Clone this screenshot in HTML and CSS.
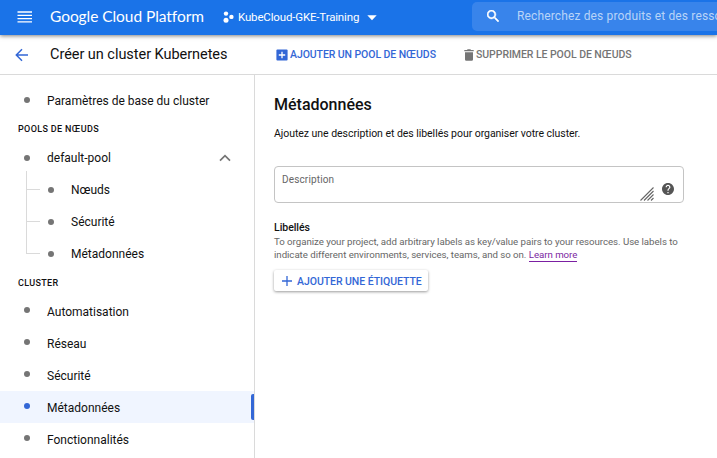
FILE: index.html
```
<!DOCTYPE html>
<html lang="fr">
<head>
<meta charset="utf-8">
<title>Créer un cluster Kubernetes</title>
<link rel="stylesheet" href="styles.css">
</head>
<body>
<header class="topbar">
  <svg class="menu" width="16" height="12" viewBox="0 0 16 12"><path d="M.5 1h14.500M.5 4.300h14.500M.5 7.600h14.500M.5 10.900h14.500" stroke="#fff" stroke-width="1.300"/></svg>
  <span class="brand">Google Cloud Platform</span>
  <svg class="project-icon" width="11" height="12" viewBox="0 0 11 12" fill="#fff"><circle cx="3" cy="2.600" r="2.200"/><circle cx="3" cy="9.200" r="2.500"/><circle cx="8.400" cy="5.900" r="2.200"/></svg>
  <span class="project">KubeCloud-GKE-Training</span>
  <svg class="caret" width="10" height="6" viewBox="0 0 10 6"><path d="M.3.3h9.400L5 5.300z" fill="#fff"/></svg>
  <div class="search">
    <svg width="12" height="12" viewBox="3 3 17.500 17.500"><path fill="#fff" stroke="#fff" stroke-width=".7" d="M15.500 14h-.79l-.28-.27A6.471 6.471 0 0 0 16 9.500 6.500 6.500 0 1 0 9.500 16c1.610 0 3.090-.59 4.230-1.570l.27.28v.79l5 4.990L20.490 19l-4.990-5zm-6 0C7.010 14 5 11.990 5 9.500S7.010 5 9.500 5 14 7.010 14 9.500 11.990 14 9.500 14z"/></svg>
    <span class="search-text">Recherchez des produits et des ressources</span>
  </div>
</header>
<div class="toolbar">
  <svg class="back" width="14" height="14" viewBox="0 0 14 14" fill="none" stroke="#3367d6" stroke-width="1.500"><path d="M13 7H1.600M7 1.200 1.300 7 7 12.800"/></svg>
  <h1 class="title">Créer un cluster Kubernetes</h1>
  <div class="action add"><svg width="12" height="12" viewBox="0 0 12 12"><rect x=".4" y=".4" width="11.200" height="11.200" rx="1" fill="#3367d6"/><path d="M6 2.800v6.400M2.800 6h6.400" stroke="#fff" stroke-width="1.300"/></svg><span class="add-text">AJOUTER UN POOL DE NŒUDS</span></div>
  <div class="action remove"><svg width="10" height="12" viewBox="0 0 10 12" fill="#757575"><path d="M.3.900h2.600L3.700.200h2.600l.8.700h2.600v1.400H.3zM1 3.200h8v7.300q0 1.300-1.300 1.300H2.300Q1 11.800 1 10.500z"/></svg><span class="remove-text">SUPPRIMER LE POOL DE NŒUDS</span></div>
</div>
<div class="body">
  <nav class="sidebar">
    <div class="item"><i class="dot"></i><span>Paramètres de base du cluster</span></div>
    <div class="group">POOLS DE NŒUDS</div>
    <div class="item pool"><i class="dot"></i><span>default-pool</span><svg class="chevron" width="12" height="8" viewBox="0 0 12 8"><path d="M1 6.700 6 1.700l5 5" fill="none" stroke="#757575" stroke-width="1.700"/></svg></div>
    <div class="tree">
      <div class="item"><i class="dot"></i><span>Nœuds</span></div>
      <div class="item"><i class="dot"></i><span>Sécurité</span></div>
      <div class="item"><i class="dot"></i><span>Métadonnées</span></div>
    </div>
    <div class="group second">CLUSTER</div>
    <div class="item low"><i class="dot"></i><span>Automatisation</span></div>
    <div class="item low"><i class="dot"></i><span>Réseau</span></div>
    <div class="item low"><i class="dot"></i><span>Sécurité</span></div>
    <div class="item low active"><i class="dot"></i><span>Métadonnées</span></div>
    <div class="item low"><i class="dot"></i><span>Fonctionnalités</span></div>
  </nav>
  <main class="content">
    <h2 class="heading">Métadonnées</h2>
    <p class="intro">Ajoutez une description et des libellés pour organiser votre cluster.</p>
    <div class="field">
      <span class="field-label">Description</span>
      <svg class="grip" width="14" height="14" viewBox="0 0 14 14"><path d="M.5 13.500 13.500.500M4 13.500 13.500 4M7.500 13.500l6-6M11 13.500l2.500-2.500" stroke="#666" stroke-width="1.100"/></svg>
      <svg class="help" width="12" height="12" viewBox="2 2 20 20"><path fill="#555" d="M12 2C6.480 2 2 6.480 2 12s4.480 10 10 10 10-4.480 10-10S17.520 2 12 2zm1 17h-2v-2h2v2zm2.070-7.750l-.9.920C13.450 12.900 13 13.500 13 15h-2v-.5c0-1.100.45-2.100 1.170-2.830l1.240-1.260c.37-.36.59-.86.59-1.410 0-1.100-.9-2-2-2s-2 .9-2 2H8c0-2.210 1.790-4 4-4s4 1.790 4 4c0 .88-.36 1.680-.93 2.250z"/></svg>
    </div>
    <h3 class="labels-title">Libellés</h3>
    <p class="labels-text"><span>To organize your project, add arbitrary labels as key/value pairs to your resources. Use labels to</span><br><span>indicate different environments, services, teams, and so on. <a class="link">Learn more</a></span></p>
    <button class="add-label"><svg width="10" height="10" viewBox="0 0 10 10"><path d="M5 0v10M0 5h10" stroke="#3367d6" stroke-width="1.300"/></svg><span>AJOUTER UNE ÉTIQUETTE</span></button>
  </main>
</div>
</body>
</html>
```
FILE: styles.css
```
* { box-sizing: border-box; }
html, body { height: 100%; }
body {
  margin: 0;
  overflow: hidden;
  display: flex;
  flex-direction: column;
  background: #fff;
  color: #111;
  font-family: Roboto, sans-serif;
}
svg { flex: none; display: block; }
h1, h2, h3, p { margin: 0; }
span { white-space: nowrap; }

.topbar {
  position: relative;
  z-index: 1;
  flex: none;
  height: 35px;
  display: flex;
  align-items: center;
  padding-left: 17px;
  background: #1a73e8;
  color: #fff;
  box-shadow: 0 1px 4px rgba(0, 0, 0, .5);
}
.menu { margin-top: -2px; }
.brand {
  width: 155px;
  margin: -3px 0 0 17px;
  font: 15.5px/20px Lato, sans-serif;
  letter-spacing: -.06px;
}
.project-icon { margin: -2px 0 0 18px; }
.project {
  width: 129px;
  margin: -1px 0 0 4px;
  font-size: 11.5px;
  line-height: 16px;
  letter-spacing: -.16px;
}
.caret { margin-left: 0; }
.search {
  flex: 1;
  height: 29px;
  margin: -3px 0 0 95px;
  padding-left: 15px;
  display: flex;
  align-items: center;
  overflow: hidden;
  border-radius: 5px 0 0 5px;
  background: #3884eb;
}
.search-text {
  margin-left: 18px;
  color: #b8d4f8;
  font-size: 12px;
  letter-spacing: .14px;
}

.toolbar {
  flex: none;
  height: 40px;
  display: flex;
  align-items: center;
  padding-left: 15px;
  border-bottom: 1px solid #dadada;
}
.title {
  width: 225px;
  margin-left: 21px;
  font-size: 14.5px;
  font-weight: 400;
  line-height: 20px;
  letter-spacing: -.04px;
  white-space: nowrap;
}
.action {
  display: flex;
  align-items: center;
  gap: 2px;
  font-size: 10.5px;
  font-weight: 500;
  letter-spacing: -.08px;
}
.add { width: 188px; margin-left: 1px; color: #3367d6; }
.remove { color: #757575; letter-spacing: -.06px; }

.body { flex: 1; display: flex; min-height: 0; }
.sidebar {
  flex: none;
  width: 255px;
  padding-top: 10px;
  border-right: 1px solid #dadada;
}
.item {
  position: relative;
  height: 32px;
  display: flex;
  align-items: center;
  padding-left: 24px;
  font-size: 12px;
}
.dot {
  flex: none;
  width: 6px;
  height: 6px;
  margin: -3px 17px 0 0;
  border-radius: 50%;
  background: #757575;
}
.group {
  height: 25px;
  padding-left: 18px;
  font-size: 9px;
  font-weight: 500;
  line-height: 25px;
  letter-spacing: .35px;
}
.second { line-height: 27px; }
.low span { margin-top: 2px; }
.chevron { margin: 0 23px 0 auto; }
.pool .dot { margin-top: -1px; }
.tree { position: relative; }
.tree .item { padding-left: 48px; }
.tree .dot { margin-top: -1px; }
.tree::before {
  content: "";
  position: absolute;
  left: 26px;
  top: -3px;
  height: 83px;
  border-left: 1px solid #dadada;
}
.tree .item::before {
  content: "";
  position: absolute;
  left: 26px;
  top: 15px;
  width: 14px;
  border-top: 1px solid #dadada;
}
.active { background: #f0f5ff; }
.active .dot { background: #3367d6; }
.active::after {
  content: "";
  position: absolute;
  right: 0;
  top: 3px;
  width: 3px;
  height: 26px;
  border-radius: 2px 0 0 2px;
  background: #3367d6;
}

.content { flex: 1; padding: 20px 0 0 19px; }
.heading { font-size: 16px; font-weight: 500; line-height: 20px; }
.intro { margin-top: 11px; font-size: 10.5px; line-height: 16px; letter-spacing: -.045px; }
.field {
  width: 410px;
  height: 37px;
  margin-top: 24px;
  padding: 0 9px 0 7px;
  display: flex;
  align-items: center;
  border: 1px solid #c4c4c4;
  border-radius: 4px;
}
.field-label { margin-top: -10px; color: #666; font-size: 10px; letter-spacing: .15px; }
.grip { margin: 20px 8px 0 auto; align-self: flex-start; }
.help { margin-top: 8px; }
.labels-title { margin-top: 17px; font-size: 10.5px; font-weight: 500; line-height: 15px; letter-spacing: -.04px; }
.labels-text { color: #666; font-size: 9.7px; line-height: 13px; letter-spacing: -.04px; }
.link { padding-bottom: 1px; color: #7b1fa2; border-bottom: 1px solid #7b1fa2; }
.add-label {
  width: 154px;
  height: 21px;
  margin-top: 9px;
  padding: 0 0 0 8px;
  display: flex;
  align-items: center;
  gap: 5px;
  border: 0;
  border-radius: 2px;
  background: #fff;
  box-shadow: 0 1px 3px rgba(0, 0, 0, .4);
  color: #3367d6;
  font: 500 10.5px Roboto, sans-serif;
  letter-spacing: -.05px;
}
.add-label span { margin-top: 1px; }
```
